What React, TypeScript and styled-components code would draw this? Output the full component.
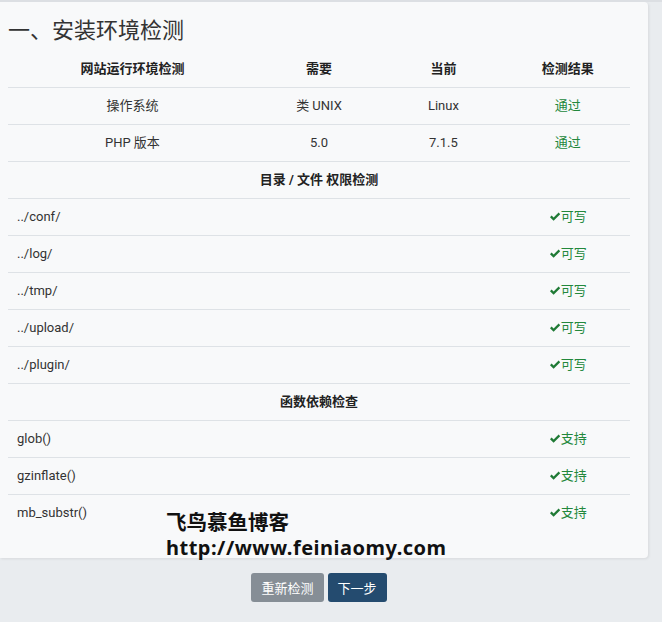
import React from "react";
import styled, { createGlobalStyle } from "styled-components";

const Global = createGlobalStyle`
  html, body { margin: 0; padding: 0; }
  body {
    background: #e9ecef;
    font-family: Roboto, "Noto Sans CJK SC", sans-serif;
    font-size: 13px;
    color: #333;
    border-top: 2px solid #dcdfe3;
  }
`;

const Page = styled.div`
  position: relative;
  width: 662px;
  min-height: 620px;
`;

const Panel = styled.section`
  width: 648px;
  box-sizing: border-box;
  padding: 14px 18px 27px 8px;
  background: #f8f9fa;
  border-radius: 0 4px 4px 0;
  box-shadow: 1px 1px 3px rgba(0, 0, 0, 0.08);
`;

const Title = styled.h3`
  margin: 0 0 4px;
  font-size: 22px;
  line-height: 30px;
  font-weight: 400;
  color: #333;
  font-family: Roboto, "Noto Sans CJK SC", sans-serif;
`;

const Table = styled.table`
  width: 622px;
  border-collapse: collapse;
  table-layout: fixed;
`;

const Row = styled.tr<{ $head?: boolean }>`
  border-top: 1px solid ${(p) => (p.$head ? "transparent" : "#dee2e6")};
`;

const Cell = styled.td<{ $align?: "left" | "center"; $bold?: boolean; $ok?: boolean }>`
  padding: 8px 9px;
  line-height: 20px;
  height: 20px;
  text-align: ${(p) => p.$align ?? "center"};
  font-weight: ${(p) => (p.$bold ? 700 : 400)};
  color: ${(p) => (p.$ok ? "#23883c" : p.$bold ? "#222" : "#333")};
  white-space: nowrap;
`;

const Check = styled.svg`
  width: 12px;
  height: 10px;
  vertical-align: -1px;
`;

const Footer = styled.div`
  width: 622px;
  margin: 15px 0 0 8px;
  display: flex;
  justify-content: center;
  gap: 4px;
`;

const Button = styled.button<{ $primary?: boolean }>`
  border: 0;
  border-radius: 3px;
  height: 29px;
  padding: 0 10px;
  font-size: 13px;
  font-family: Roboto, "Noto Sans CJK SC", sans-serif;
  color: #fff;
  background: ${(p) => (p.$primary ? "#244b6f" : "#868e96")};
  cursor: pointer;
`;

const Watermark = styled.div`
  position: absolute;
  left: 166px;
  top: 507px;
  font-family: "Noto Sans", "Noto Sans CJK SC", sans-serif;
  font-weight: 700;
  color: #111;
  line-height: 26px;
  pointer-events: none;
`;

const WmLine = styled.div<{ $size: number; $spacing?: number }>`
  font-size: ${(p) => p.$size}px;
  letter-spacing: ${(p) => p.$spacing ?? 0}px;
  white-space: nowrap;
`;

const Ok = ({ text }: { text: string }) => (
  <>
    <Check viewBox="0 0 12 10">
      <path d="M1 5.2 L2.6 3.6 L4.6 5.6 L9.6 0.6 L11.2 2.2 L4.6 8.8 Z" fill="#1f7a35" />
    </Check>
    {text}
  </>
);

const env = [
  ["操作系统", "类 UNIX", "Linux"],
  ["PHP 版本", "5.0", "7.1.5"],
];
const dirs = ["../conf/", "../log/", "../tmp/", "../upload/", "../plugin/"];
const funcs = ["glob()", "gzinflate()", "mb_substr()"];

export default function App() {
  return (
    <Page>
      <Global />
      <Panel>
        <Title>一、安装环境检测</Title>
        <Table>
          <colgroup>
            <col style={{ width: "40%" }} />
            <col style={{ width: "20%" }} />
            <col style={{ width: "20%" }} />
            <col style={{ width: "20%" }} />
          </colgroup>
          <tbody>
            <Row $head>
              <Cell $bold>网站运行环境检测</Cell>
              <Cell $bold>需要</Cell>
              <Cell $bold>当前</Cell>
              <Cell $bold>检测结果</Cell>
            </Row>
            {env.map(([a, b, c]) => (
              <Row key={a}>
                <Cell>{a}</Cell>
                <Cell>{b}</Cell>
                <Cell>{c}</Cell>
                <Cell $ok>通过</Cell>
              </Row>
            ))}
            <Row>
              <Cell $bold colSpan={4}>目录 / 文件 权限检测</Cell>
            </Row>
            {dirs.map((d) => (
              <Row key={d}>
                <Cell $align="left" colSpan={3}>{d}</Cell>
                <Cell $ok><Ok text="可写" /></Cell>
              </Row>
            ))}
            <Row>
              <Cell $bold colSpan={4}>函数依赖检查</Cell>
            </Row>
            {funcs.map((f) => (
              <Row key={f}>
                <Cell $align="left" colSpan={3}>{f}</Cell>
                <Cell $ok><Ok text="支持" /></Cell>
              </Row>
            ))}
          </tbody>
        </Table>
      </Panel>
      <Footer>
        <Button>重新检测</Button>
        <Button $primary>下一步</Button>
      </Footer>
      <Watermark>
        <WmLine $size={20.5}>飞鸟慕鱼博客</WmLine>
        <WmLine $size={20} $spacing={0.5}>http://www.feiniaomy.com</WmLine>
      </Watermark>
    </Page>
  );
}
